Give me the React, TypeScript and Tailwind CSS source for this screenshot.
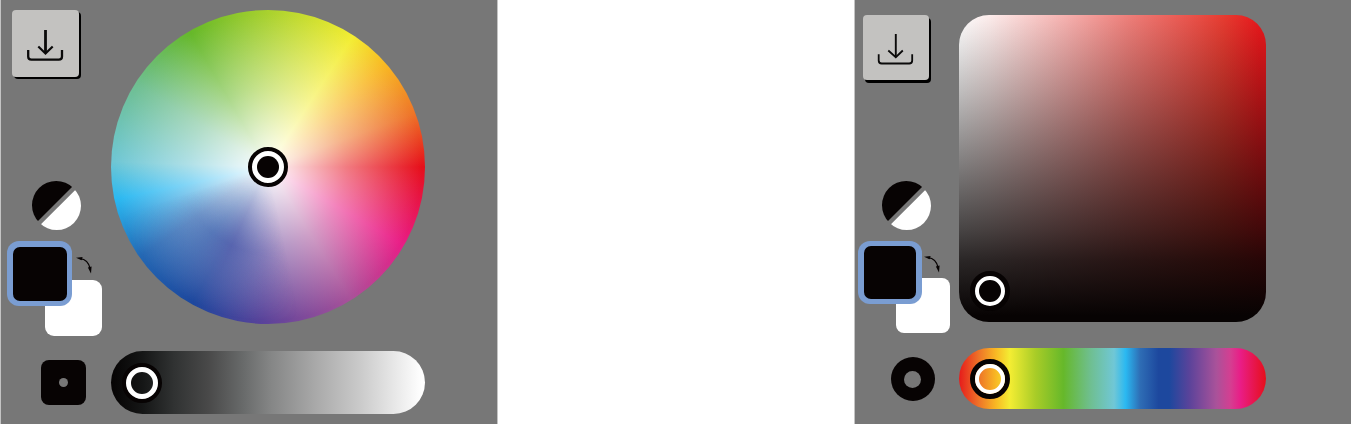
import type { ReactNode } from "react";

function ContrastIcon({ id }: { id: string }) {
  return (
    <svg className="block" width="49" height="49" viewBox="0 0 49 49">
      <clipPath id={`${id}-dark`}>
        <path d="M-2 -2 H48 L-2 48 Z" />
      </clipPath>
      <clipPath id={`${id}-light`}>
        <path d="M52.2 0 L0 52.2 H60 V0 Z" />
      </clipPath>
      <circle cx="24.2" cy="24.2" r="24.2" fill="#070303" clipPath={`url(#${id}-dark)`} />
      <circle cx="24.8" cy="24.8" r="24.2" fill="#fff" clipPath={`url(#${id}-light)`} />
    </svg>
  );
}

function SwapArrow() {
  return (
    <svg className="block" width="17" height="17" viewBox="0 0 17 17">
      <path d="M4 1.6 C9 2 13 6 14.3 12" fill="none" stroke="#070303" strokeWidth="1.2" />
      <path d="M0 0.7 L6.6 0 L5.6 3.2 Z" fill="#070303" />
      <path d="M15 16.5 L11.9 10.4 L15.6 9.6 Z" fill="#070303" />
    </svg>
  );
}

function Knob({ className, children }: { className: string; children?: ReactNode }) {
  return (
    <div className={`absolute flex size-10 items-center justify-center rounded-full border-[#070303] ${className}`}>
      {children}
    </div>
  );
}

function WheelPanel() {
  return (
    <section className="flex h-[424px] w-[498px] shrink-0 border-x border-[#c4c4c4] bg-[#777777]">
      <aside className="flex w-[110px] shrink-0 flex-col items-start pt-[10px]">
        <button className="ml-[11px] size-[67px] rounded-[4px] bg-[#c3c2c0] shadow-[2px_2px_0_#000]" aria-label="Download">
          <svg className="block" width="67" height="67" viewBox="0 0 67 67" fill="none" stroke="#0b0a0a">
            <path d="M33.5 20 V43" strokeWidth="2.8" />
            <path d="M26.3 36.5 L33.5 43.5 L40.7 36.5" strokeWidth="2.2" />
            <path d="M16.2 40 V46.5 Q16.2 49.7 19.4 49.7 H46.8 Q50 49.7 50 46.5 V40" strokeWidth="2.3" />
          </svg>
        </button>
        <div className="mt-[104px] ml-[31px]">
          <ContrastIcon id="wheel-contrast" />
        </div>
        <div className="relative mt-[11px] ml-[6px] flex">
          <div className="z-10 size-[65px] rounded-[12px] bg-[#7a9dd2] pt-[6px] pl-[6px]">
            <div className="size-[54px] rounded-[7px] bg-[#070303]" />
          </div>
          <div className="mt-[39px] -ml-[27px] h-[56px] w-[57px] rounded-[9px] bg-white" />
          <div className="absolute top-[16px] left-[69px]">
            <SwapArrow />
          </div>
        </div>
        <div className="mt-[24px] ml-[40px] flex size-[45px] items-center justify-center rounded-[8px] bg-[#070303]">
          <div className="size-[9px] rounded-full bg-[#777777]" />
        </div>
      </aside>
      <div className="flex flex-col gap-[27px] pt-[10px]">
        <div className="relative size-[314px] rounded-full bg-[radial-gradient(circle_closest-side,#fff_0%,rgba(255,255,255,0.45)_50%,rgba(255,255,255,0)_98%),conic-gradient(from_90deg,#e60f1a_0deg,#e91d86_30deg,#a9529a_58deg,#5a439a_92deg,#1d489e_119deg,#2468b4_145deg,#2ab8f1_168deg,#6fc7d4_182deg,#6fbf92_212deg,#66b82a_240deg,#f3ed33_303deg,#f8b824_319deg,#ee7428_340deg,#e60f1a_360deg)]">
          <div className="size-full rounded-full bg-[conic-gradient(from_90deg,rgba(80,70,158,0)_78deg,rgba(62,70,160,0.6)_115deg,rgba(50,84,166,0.5)_130deg,rgba(50,120,190,0)_162deg,rgba(50,120,190,0)_360deg)] [mask-image:radial-gradient(circle_closest-side,transparent_8%,black_55%,transparent_100%)]" />
          <Knob className="top-[137px] left-[137px] border-4 bg-white">
            <div className="size-[22px] rounded-full bg-[#070303]" />
          </Knob>
        </div>
        <div className="relative h-[63px] w-[314px] rounded-full bg-[linear-gradient(90deg,#050303_0%,#151616_10%,#303232_20%,#494949_31%,#686a6a_42%,#858686_51%,#ababab_66%,#cccccc_80%,#fff_99%)]">
          <Knob className="top-[12px] left-[11px] border-4">
            <div className="size-8 rounded-full border-5 border-white" />
          </Knob>
        </div>
      </div>
    </section>
  );
}

function SquarePanel() {
  return (
    <section className="flex h-[424px] w-[497px] shrink-0 border-l border-[#c4c4c4] bg-[#777777]">
      <aside className="flex w-[104px] shrink-0 flex-col items-start pt-[15px]">
        <button className="ml-[8px] h-[65px] w-[66px] rounded-[4px] bg-[#c3c2c0] shadow-[2px_3px_0_#000]" aria-label="Download">
          <svg className="block" width="66" height="65" viewBox="0 0 66 65" fill="none" stroke="#0b0a0a">
            <path d="M32.8 19 V42" strokeWidth="1.9" />
            <path d="M25.3 35.5 L32.8 42.2 L39.8 35.5" strokeWidth="1.8" />
            <path d="M15.7 39.3 V45.5 Q15.7 48.5 18.7 48.5 H46.2 Q49.2 48.5 49.2 45.5 V39.3" strokeWidth="1.8" />
          </svg>
        </button>
        <div className="mt-[101px] ml-[27px]">
          <ContrastIcon id="square-contrast" />
        </div>
        <div className="relative mt-[11px] ml-[3px] flex">
          <div className="z-10 h-[63px] w-[64px] rounded-[12px] bg-[#7a9dd2] pt-[5px] pl-[6px]">
            <div className="h-[53px] w-[52px] rounded-[7px] bg-[#070303]" />
          </div>
          <div className="mt-[37px] -ml-[26px] h-[55px] w-[54px] rounded-[8px] bg-white" />
          <div className="absolute top-[15px] left-[66px]">
            <SwapArrow />
          </div>
        </div>
        <div className="mt-[24px] ml-[36px] flex size-[44px] items-center justify-center rounded-full bg-[#070303]">
          <div className="mr-px size-[17px] rounded-full bg-[#777777]" />
        </div>
      </aside>
      <div className="flex flex-col gap-[26px] pt-[15px]">
        <div className="relative size-[307px] rounded-[30px] bg-[linear-gradient(180deg,rgba(7,3,3,0)_0%,rgba(7,3,3,0.26)_25%,rgba(7,3,3,0.4)_38%,rgba(7,3,3,0.53)_50%,rgba(7,3,3,0.74)_70%,rgba(7,3,3,0.86)_80%,rgba(7,3,3,1)_98%),linear-gradient(90deg,#fff_0%,#fdeceb_10%,#f6b0ae_35%,#ee7f7a_55%,#ea544c_75%,#e73c31_86%,#e8181c_98%)]">
          <Knob className="top-[256px] left-[11px] border-5 bg-[#070303]">
            <div className="size-[30px] rounded-full border-4 border-white" />
          </Knob>
        </div>
        <div className="relative h-[61px] w-[307px] rounded-full bg-[linear-gradient(90deg,#e61b1b_0%,#ee7428_6.5%,#f8b824_12%,#f3ed33_16.6%,#a8cc27_25%,#66b82a_34%,#6fbf92_43%,#70c7d6_50.5%,#2ab8f1_54.3%,#2e6db5_59%,#1d489e_65%,#1d489e_68.5%,#5a439a_75%,#a9529a_83.8%,#d53e91_88.5%,#e91d86_91.7%,#e60f1a_100%)]">
          <Knob className="top-[11px] left-[11px] border-5">
            <div className="size-[30px] shrink-0 rounded-full border-4 border-white" />
          </Knob>
        </div>
      </div>
    </section>
  );
}

export default function App() {
  return (
    <main className="flex h-[424px] w-[1351px] justify-between overflow-hidden bg-white">
      <WheelPanel />
      <SquarePanel />
    </main>
  );
}
